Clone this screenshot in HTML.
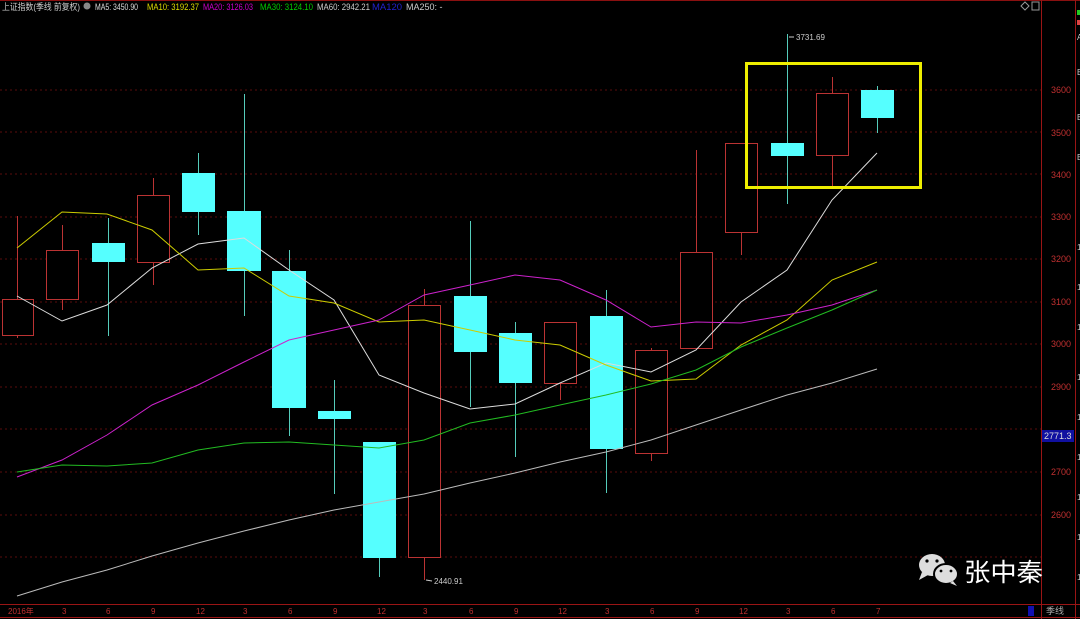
<!DOCTYPE html>
<html><head><meta charset="utf-8"><style>
html,body{margin:0;padding:0;background:#000;width:1080px;height:619px;overflow:hidden}
svg{display:block}
text{font-family:"Liberation Sans","Noto Sans CJK SC",sans-serif}
</style></head><body>
<svg width="1080" height="619" viewBox="0 0 1080 619" xmlns="http://www.w3.org/2000/svg">
<rect width="1080" height="619" fill="#000"/>
<line x1="0" y1="0.5" x2="1080" y2="0.5" stroke="#8a1010"/>
<g stroke="#5a0c0c" stroke-dasharray="2,3" stroke-width="1">
<line x1="0" y1="90" x2="1041" y2="90"/><line x1="0" y1="132" x2="1041" y2="132"/>
<line x1="0" y1="174" x2="1041" y2="174"/><line x1="0" y1="217" x2="1041" y2="217"/>
<line x1="0" y1="259" x2="1041" y2="259"/><line x1="0" y1="302" x2="1041" y2="302"/>
<line x1="0" y1="344" x2="1041" y2="344"/><line x1="0" y1="387" x2="1041" y2="387"/>
<line x1="0" y1="429" x2="1041" y2="429"/><line x1="0" y1="472" x2="1041" y2="472"/>
<line x1="0" y1="515" x2="1041" y2="515"/><line x1="0" y1="557" x2="1041" y2="557"/>
</g>
<line x1="1041.5" y1="0" x2="1041.5" y2="619" stroke="#9a1515"/>
<line x1="1075.5" y1="0" x2="1075.5" y2="619" stroke="#9a1515"/>
<line x1="0" y1="604.5" x2="1080" y2="604.5" stroke="#9a1515"/>
<line x1="0" y1="617.5" x2="1080" y2="617.5" stroke="#9a1515"/>
<g fill="#c03030" font-size="9" text-anchor="end">
<text x="1071" y="93">3600</text><text x="1071" y="136">3500</text><text x="1071" y="178">3400</text>
<text x="1071" y="220">3300</text><text x="1071" y="262">3200</text><text x="1071" y="305">3100</text>
<text x="1071" y="347">3000</text><text x="1071" y="390">2900</text><text x="1071" y="475">2700</text>
<text x="1071" y="518">2600</text>
</g>
<rect x="1042" y="430" width="32" height="12" fill="#1010a0"/>
<text x="1044" y="439" fill="#ddd" font-size="9">2771.3</text>
<rect x="1077" y="10" width="3" height="5" fill="#2c2"/><rect x="1077" y="20" width="3" height="5" fill="#d44"/>
<g fill="#ccc" font-size="8"><text x="1077" y="40">A</text><text x="1077" y="75">B</text><text x="1077" y="120">B</text><text x="1077" y="160">B</text><text x="1077" y="250">1</text><text x="1077" y="290">1</text><text x="1077" y="330">1</text><text x="1077" y="380">1</text><text x="1077" y="420">1</text><text x="1077" y="460">1</text><text x="1077" y="500">1</text><text x="1077" y="540">1</text><text x="1077" y="580">1</text></g>
<g fill="#c03030" font-size="8">
<text x="8" y="614">2016年</text><text x="62" y="614">3</text><text x="106" y="614">6</text><text x="151" y="614">9</text>
<text x="196" y="614">12</text><text x="243" y="614">3</text><text x="288" y="614">6</text><text x="333" y="614">9</text>
<text x="377" y="614">12</text><text x="423" y="614">3</text><text x="469" y="614">6</text><text x="514" y="614">9</text>
<text x="558" y="614">12</text><text x="605" y="614">3</text><text x="650" y="614">6</text><text x="695" y="614">9</text>
<text x="739" y="614">12</text><text x="786" y="614">3</text><text x="831" y="614">6</text><text x="876" y="614">7</text>
</g>
<rect x="1028" y="606" width="6" height="10" fill="#1010b0"/>
<text x="1046" y="614" fill="#aaa" font-size="9">季线</text>
<g font-size="9">
<text x="2" y="10" fill="#ccc" textLength="78" lengthAdjust="spacingAndGlyphs">上证指数(季线 前复权)</text>
<circle cx="87" cy="6" r="3.5" fill="#888"/>
<text x="95" y="10" fill="#ddd" textLength="43" lengthAdjust="spacingAndGlyphs">MA5: 3450.90</text>
<text x="147" y="10" fill="#dd0" textLength="52" lengthAdjust="spacingAndGlyphs">MA10: 3192.37</text>
<text x="203" y="10" fill="#c0c" textLength="50" lengthAdjust="spacingAndGlyphs">MA20: 3126.03</text>
<text x="260" y="10" fill="#0c0" textLength="53" lengthAdjust="spacingAndGlyphs">MA30: 3124.10</text>
<text x="317" y="10" fill="#ccc" textLength="53" lengthAdjust="spacingAndGlyphs">MA60: 2942.21</text>
<text x="372" y="10" fill="#22c" textLength="30" lengthAdjust="spacingAndGlyphs">MA120</text>
<text x="406" y="10" fill="#ccc">MA250: -</text>
</g>
<path d="M1021 6 L1025 2 L1029 6 L1025 10Z" fill="none" stroke="#999"/>
<rect x="1032" y="2" width="7" height="8" fill="none" stroke="#999"/>
<g stroke-width="1">
<g stroke="#b33">
<line x1="17.5" y1="216" x2="17.5" y2="338"/><line x1="62.5" y1="225" x2="62.5" y2="310"/>
<line x1="153.5" y1="178" x2="153.5" y2="285"/><line x1="424.5" y1="289" x2="424.5" y2="580"/>
<line x1="560.5" y1="322" x2="560.5" y2="400"/><line x1="651.5" y1="348" x2="651.5" y2="461"/>
<line x1="696.5" y1="150" x2="696.5" y2="350"/><line x1="741.5" y1="143" x2="741.5" y2="255"/>
<line x1="832.5" y1="77" x2="832.5" y2="186"/>
</g>
<g stroke="#5cb">
<line x1="108.5" y1="218" x2="108.5" y2="336"/><line x1="198.5" y1="153" x2="198.5" y2="235"/>
<line x1="244.5" y1="94" x2="244.5" y2="316"/><line x1="289.5" y1="250" x2="289.5" y2="436"/>
<line x1="334.5" y1="380" x2="334.5" y2="494"/><line x1="379.5" y1="442" x2="379.5" y2="577"/>
<line x1="470.5" y1="221" x2="470.5" y2="407"/><line x1="515.5" y1="322" x2="515.5" y2="457"/>
<line x1="606.5" y1="290" x2="606.5" y2="493"/><line x1="787.5" y1="34" x2="787.5" y2="204"/>
<line x1="877.5" y1="86" x2="877.5" y2="133"/>
</g>
</g>
<g fill="#000" stroke="#b33">
<rect x="2.5" y="299.5" width="31" height="36"/><rect x="46.5" y="250.5" width="32" height="49"/>
<rect x="137.5" y="195.5" width="32" height="67"/><rect x="408.5" y="305.5" width="32" height="252"/>
<rect x="544.5" y="322.5" width="32" height="61"/><rect x="635.5" y="350.5" width="32" height="103"/>
<rect x="680.5" y="252.5" width="32" height="96"/><rect x="725.5" y="143.5" width="32" height="89"/>
<rect x="816.5" y="93.5" width="32" height="62"/>
</g>
<g fill="#5ff">
<rect x="92" y="243" width="33" height="19"/><rect x="182" y="173" width="33" height="39"/>
<rect x="227" y="211" width="34" height="60"/><rect x="272" y="271" width="34" height="137"/>
<rect x="318" y="411" width="33" height="8"/><rect x="363" y="442" width="33" height="116"/>
<rect x="454" y="296" width="33" height="56"/><rect x="499" y="333" width="33" height="50"/>
<rect x="590" y="316" width="33" height="133"/><rect x="771" y="143" width="33" height="13"/>
<rect x="861" y="90" width="33" height="28"/>
</g>
<g fill="none" stroke-width="1">
<polyline stroke="#ddd" points="17,296 62,321 107,305 152,268 198,244 244,238 289,270 334,300 379,375 424,393 470,409 515,404 560,383 606,363 651,372 696,350 741,302 787,270 832,200 877,153"/>
<polyline stroke="#cc0" points="17,248 62,212 107,214 152,230 198,270 244,268 289,296 334,303 379,322 424,320 470,330 515,340 560,345 606,365 651,381 696,379 741,345 787,320 832,280 877,262"/>
<polyline stroke="#c2c" points="17,477 62,460 107,435 152,405 198,385 244,362 289,340 334,330 379,320 424,295 470,285 515,275 560,280 606,300 651,327 696,322 741,323 787,315 832,305 877,290"/>
<polyline stroke="#2b2" points="17,472 62,465 107,466 152,463 198,450 244,443 289,442 334,445 379,448 424,440 470,423 515,415 560,405 606,395 651,384 696,370 741,347 787,328 832,310 877,290"/>
<polyline stroke="#bbb" points="17,596 62,582 107,570 152,556 198,543 244,531 289,520 334,510 379,502 424,494 470,483 515,473 560,462 606,452 651,440 696,425 741,410 787,395 832,383 877,369"/>
</g>
<text x="796" y="40" fill="#ccc" font-size="8">3731.69</text>
<line x1="789" y1="37" x2="794" y2="37" stroke="#ccc"/>
<text x="434" y="584" fill="#ccc" font-size="8">2440.91</text>
<line x1="426" y1="580" x2="432" y2="581" stroke="#ccc"/>
<rect x="746.5" y="63.5" width="174" height="124" fill="none" stroke="#ee0" stroke-width="3"/>
<g fill="#ddd">
<ellipse cx="932" cy="565" rx="13" ry="11"/>
<path d="M922 572 L919 580 L928 575Z"/>
<ellipse cx="946" cy="574" rx="12" ry="10" stroke="#000" stroke-width="2"/>
<path d="M953 581 L957 586 L950 583Z"/>
<circle cx="927" cy="561" r="1.6" fill="#000"/><circle cx="937" cy="561" r="1.6" fill="#000"/>
<circle cx="941" cy="571" r="1.4" fill="#000"/><circle cx="951" cy="571" r="1.4" fill="#000"/>
</g>
<text x="964" y="581" fill="#fff" font-size="25" textLength="79" lengthAdjust="spacingAndGlyphs">张中秦</text>
</svg>
</body></html>
